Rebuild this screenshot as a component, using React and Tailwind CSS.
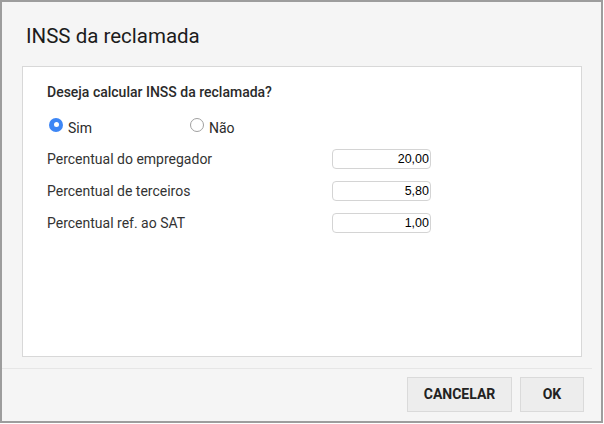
import React from 'react';

const rows = [
  { label: 'Percentual do empregador', value: '20,00' },
  { label: 'Percentual de terceiros', value: '5,80' },
  { label: 'Percentual ref. ao SAT', value: '1,00' },
];

const Radio = ({ checked }) =>
  checked ? (
    <span className="w-[14px] h-[14px] rounded-full bg-[#3d86f5] flex items-center justify-center">
      <span className="w-[5px] h-[5px] rounded-full bg-white" />
    </span>
  ) : (
    <span className="block w-[14px] h-[14px] rounded-full bg-white border border-[#a0a0a0]" />
  );

const App = () => {
  return (
    <div className="w-[603px] h-[423px] bg-[#f5f5f5] border-2 border-[#9d9d9d] flex flex-col font-['Roboto',sans-serif] text-[#2b2b2b]">
      {/* Header */}
      <div className="h-[64px] pl-[24px] pt-[22px]">
        <h1 className="text-[20.5px] leading-[24px] text-[#1c1c1c]">INSS da reclamada</h1>
      </div>

      {/* Body panel */}
      <div className="ml-[20px] mr-[19px] h-[291px] bg-white border border-[#d8d8d8] pl-[24px] pt-[15px]">
        <p className="text-[14px] leading-[20px] font-medium text-[#2a2a2a]">Deseja calcular INSS da reclamada?</p>

        <div className="mt-[16px] h-[20px] flex items-center text-[14px] leading-[20px]">
          <label className="flex items-center w-[143px] pl-[2px]">
            <span className="-mt-[7px]"><Radio checked /></span>
            <span className="ml-[5px]">Sim</span>
          </label>
          <label className="flex items-center">
            <span className="-mt-[7px]"><Radio /></span>
            <span className="ml-[5px]">Não</span>
          </label>
        </div>

        <div className="mt-[5px] flex flex-col">
          {rows.map((r) => (
            <div key={r.label} className="h-[32px] flex items-center text-[14px] leading-[20px] text-[#333]">
              <span className="w-[285px]">{r.label}</span>
              <input
                readOnly
                value={r.value}
                className="w-[99px] h-[20px] rounded-[4px] border border-[#d4d4d4] bg-white text-right pr-[1px] text-[12.5px] font-['Liberation_Sans',sans-serif] text-black outline-none"
              />
            </div>
          ))}
        </div>
      </div>

      {/* Footer */}
      <div className="mt-[11px] mr-[9px] h-px bg-[#e6e6e6]" />
      <div className="flex justify-end gap-[8px] pt-[8px] pr-[17px]">
        <button className="w-[105px] h-[35px] bg-[#ededed] border border-[#dadada] text-[14px] font-bold text-[#222]">
          CANCELAR
        </button>
        <button className="w-[64px] h-[35px] bg-[#ededed] border border-[#dadada] text-[14px] font-bold text-[#222]">
          OK
        </button>
      </div>
    </div>
  );
};

export default App;
